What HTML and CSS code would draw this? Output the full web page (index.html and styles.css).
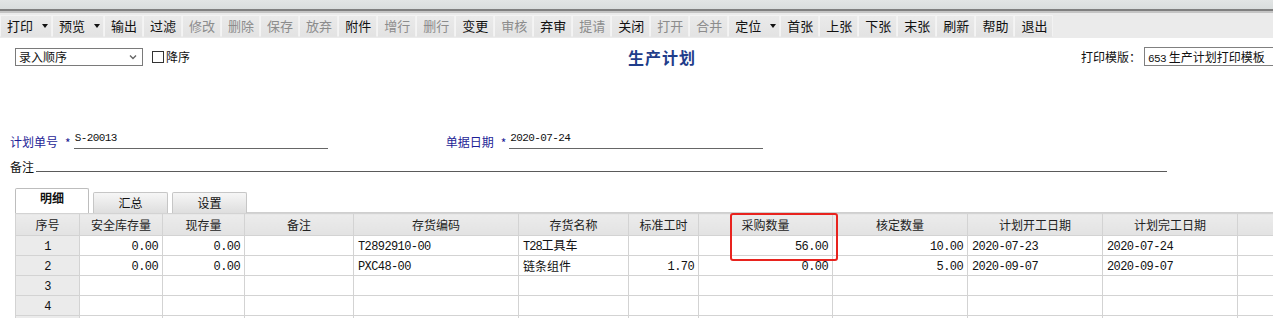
FILE: index.html
```html
<!DOCTYPE html>
<html lang="zh-CN">
<head>
  <meta charset="UTF-8">
  <title>生产计划</title>
  <link rel="stylesheet" href="styles.css">
</head>
<body>
  <div class="page">
    <!-- TOOLBAR -->
    <div class="topbar"></div>
    <div class="toolbar">
      <span class="btn drop">打印<i class="caret"></i></span>
      <span class="btn drop">预览<i class="caret"></i></span>
      <span class="btn">输出</span>
      <span class="btn">过滤</span>
      <span class="btn off">修改</span>
      <span class="btn off">删除</span>
      <span class="btn off">保存</span>
      <span class="btn off">放弃</span>
      <span class="btn">附件</span>
      <span class="btn off">增行</span>
      <span class="btn off">删行</span>
      <span class="btn">变更</span>
      <span class="btn off">审核</span>
      <span class="btn">弃审</span>
      <span class="btn off">提请</span>
      <span class="btn">关闭</span>
      <span class="btn off">打开</span>
      <span class="btn off">合并</span>
      <span class="btn drop">定位<i class="caret"></i></span>
      <span class="btn">首张</span>
      <span class="btn">上张</span>
      <span class="btn">下张</span>
      <span class="btn">末张</span>
      <span class="btn">刷新</span>
      <span class="btn">帮助</span>
      <span class="btn">退出</span>
    </div>

    <!-- OPTIONS ROW -->
    <div class="opts">
      <div class="opts-left">
        <div class="select">
          <span>录入顺序</span>
          <svg width="8" height="6" viewBox="0 0 8 6"><path d="M1 1.5 L4 4.5 L7 1.5" fill="none" stroke="#666" stroke-width="1.4"/></svg>
        </div>
        <span class="check"><span class="box"></span>降序</span>
      </div>
      <div class="title">生产计划</div>
      <div class="opts-right">
        <span>打印模版：</span>
        <div class="tpl"><span class="mono">653</span>&nbsp;生产计划打印模板</div>
      </div>
    </div>

    <!-- HEADER FIELDS -->
    <div class="fields">
      <div class="field">
        <span class="lbl">计划单号</span><span class="star">*</span>
        <span class="val mono">S-20013</span>
      </div>
      <div class="field field-2">
        <span class="lbl">单据日期</span><span class="star">*</span>
        <span class="val mono">2020-07-24</span>
      </div>
    </div>
    <div class="remark">
      <span class="rlbl">备注</span>
      <span class="rline"></span>
    </div>

    <!-- TABS -->
    <div class="tabs">
      <span class="tab active">明细</span>
      <span class="tab">汇总</span>
      <span class="tab">设置</span>
      <span class="tab-rest"></span>
    </div>

    <!-- GRID -->
    <div class="grid-wrap">
      <table class="grid">
        <colgroup>
          <col style="width:64px"><col style="width:83px"><col style="width:82px"><col style="width:109px">
          <col style="width:165px"><col style="width:110px"><col style="width:70px"><col style="width:134px">
          <col style="width:135px"><col style="width:135px"><col style="width:135px"><col style="width:60px">
        </colgroup>
        <tr>
          <th>序号</th><th>安全库存量</th><th>现存量</th><th>备注</th><th>存货编码</th><th>存货名称</th>
          <th>标准工时</th><th>采购数量</th><th>核定数量</th><th>计划开工日期</th><th>计划完工日期</th><th></th>
        </tr>
        <tr>
          <td class="no mono">1</td><td class="num mono">0.00</td><td class="num mono">0.00</td><td></td>
          <td class="mono">T2892910-00</td><td><span class="mono t28">T28</span>工具车</td><td></td>
          <td class="num mono">56.00</td><td class="num mono">10.00</td><td class="mono">2020-07-23</td><td class="mono">2020-07-24</td><td></td>
        </tr>
        <tr>
          <td class="no mono">2</td><td class="num mono">0.00</td><td class="num mono">0.00</td><td></td>
          <td class="mono">PXC48-00</td><td>链条组件</td><td class="num mono">1.70</td>
          <td class="num mono">0.00</td><td class="num mono">5.00</td><td class="mono">2020-09-07</td><td class="mono">2020-09-07</td><td></td>
        </tr>
        <tr>
          <td class="no mono">3</td><td></td><td></td><td></td><td></td><td></td><td></td><td></td><td></td><td></td><td></td><td></td>
        </tr>
        <tr>
          <td class="no mono">4</td><td></td><td></td><td></td><td></td><td></td><td></td><td></td><td></td><td></td><td></td><td></td>
        </tr>
        <tr>
          <td class="no mono"></td><td></td><td></td><td></td><td></td><td></td><td></td><td></td><td></td><td></td><td></td><td></td>
        </tr>
      </table>
      <div class="mark"></div>
    </div>
  </div>
</body>
</html>
```

FILE: styles.css
```css
*{
  padding: 0;
  margin: 0;
  box-sizing: border-box;
}
body {
  font-family: "Noto Sans CJK SC", "Liberation Sans", sans-serif;
  font-size: 12px;
  color: #111;
  background: #fff;
  overflow: hidden;
}
.page {
  width: 1273px;
  height: 318px;
  overflow: hidden;
}
.mono {
  font-family: "Liberation Mono", "DejaVu Sans Mono", monospace;
  font-size: 11px;
  letter-spacing: -0.6px;
}

/* toolbar */
.topbar {
  height: 13px;
  background: linear-gradient(#e2e5e5 0, #d9dddd 9px, #7f7f7f 9px, #7f7f7f 11px, #c4c4c4 11px);
}
.toolbar {
  display: flex;
  align-items: center;
  height: 25px;
  background: #ebebeb;
}
.toolbar .btn {
  display: flex;
  flex-shrink: 0;
  align-items: center;
  height: 22px;
  padding: 0 5px 0 6px;
  font-size: 13px;
  line-height: 22px;
  color: #111;
  border: 1px solid #f4f4f4;
  border-bottom-color: #e4e4e4;
  border-right-color: #f2f2f2;
  background: linear-gradient(#eaeaea, #e3e3e3);
}
.toolbar .btn.off   { color: #8c8c8c; }
.toolbar .btn.drop  { padding-right: 3px; }
.toolbar .caret {
  display: inline-block;
  width: 0;
  height: 0;
  margin-left: 9px;
  border-left: 3px solid transparent;
  border-right: 3px solid transparent;
  border-top: 4px solid #111;
}

/* options row */
.opts {
  display: flex;
  align-items: center;
  height: 19px;
  margin-top: 9px;
}
.opts > div { flex-shrink: 0; }
.opts-left {
  display: flex;
  align-items: center;
  width: 628px;
  padding-left: 15px;
}
.select {
  display: flex;
  align-items: center;
  justify-content: space-between;
  width: 128px;
  height: 18px;
  padding: 0 5px 0 3px;
  border: 1px solid #7a7a7a;
  font-size: 12px;
}
.check {
  display: flex;
  align-items: center;
  margin-left: 9px;
  font-size: 12px;
}
.check .box {
  display: inline-block;
  width: 12px;
  height: 12px;
  margin-right: 2px;
  border: 1px solid #333;
  background: #fff;
}
.title {
  width: 453px;
  font-size: 16px;
  font-weight: 700;
  letter-spacing: 1px;
  color: #1f3d8a;
}
.opts-right {
  display: flex;
  align-items: center;
  font-size: 12px;
  white-space: nowrap;
}
.opts-right .tpl {
  height: 19px;
  width: 180px;
  margin-left: 3px;
  padding-left: 3px;
  line-height: 17px;
  border: 1px solid #808080;
  border-right: none;
  font-size: 12px;
}

/* header fields */
.fields {
  display: flex;
  height: 16px;
  margin-top: 67px;
  padding-left: 10px;
}
.field {
  display: flex;
  align-items: center;
  height: 16px;
}
.field-2 { margin-left: 118px; }
.field .lbl   { color: #1e1e96; font-size: 12px; }
.field .star  { color: #1e1e96; font-size: 12px; line-height: 12px; margin: 4px 3px 0 7px; }
.field .val {
  display: block;
  width: 254px;
  height: 16px;
  line-height: 10px;
  padding-left: 1px;
  border-bottom: 1px solid #666;
}
.remark {
  display: flex;
  align-items: flex-end;
  height: 13px;
  margin-top: 11px;
  padding-left: 10px;
}
.remark .rlbl  { font-size: 12px; line-height: 13px; margin-right: 2px; }
.remark .rline { width: 1131px; height: 1px; margin-bottom: 1px; background: #5a5a5a; }

/* tabs */
.tabs {
  display: flex;
  align-items: flex-end;
  height: 25px;
  margin-top: 15px;
  padding-left: 15px;
}
.tab {
  width: 75px;
  height: 21px;
  margin-right: 4px;
  text-align: center;
  line-height: 20px;
  font-size: 12px;
  border: 1px solid #c6c6c6;
  border-bottom: none;
  border-radius: 2px 2px 0 0;
  background: linear-gradient(#f6f6f6, #dedede);
}
.tab.active {
  width: 74px;
  height: 25px;
  margin-right: 4px;
  font-weight: 700;
  line-height: 18px;
  background: #fff;
  border-color: #bdbdbd;
}
.tab-rest {
  flex: 1;
  height: 1px;
  margin-left: -4px;
  background: #cfcfcf;
}

/* grid */
.grid-wrap {
  position: relative;
  padding-left: 15px;
}
.grid {
  border-collapse: collapse;
  table-layout: fixed;
  width: 1282px;
}
.grid th, .grid td {
  height: 20px;
  padding: 0 4px;
  line-height: 16px;
  border: 1px solid #d3d3d3;
  font-size: 12px;
  white-space: nowrap;
  overflow: hidden;
}
.grid th {
  height: 22px;
  font-weight: 400;
  color: #222;
  background: linear-gradient(#ececec, #e2e2e2);
}
.grid td.mono { padding-top: 3px; }
.grid td.no   { text-align: center; background: #ebebeb; }
.grid td.num  { text-align: right; }
.grid .t28    { font-size: 12px; letter-spacing: -1px; }
.mark {
  position: absolute;
  left: 730px;
  top: 0px;
  width: 108px;
  height: 48px;
  border: 2px solid #e8231e;
  border-radius: 3px;
}
```
